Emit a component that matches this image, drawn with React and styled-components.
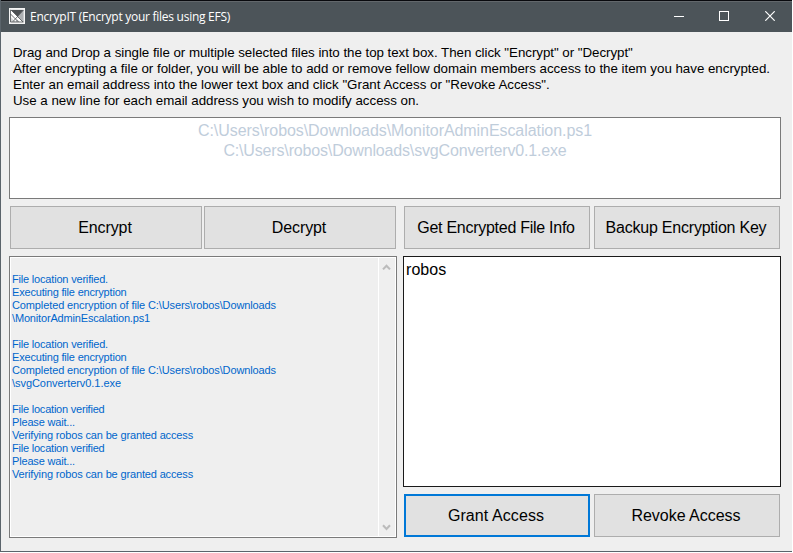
import React from "react";
import styled, { createGlobalStyle } from "styled-components";

const GlobalStyle = createGlobalStyle`
  * { box-sizing: border-box; }
  body { margin: 0; background: #fff; overflow: hidden; font-family: "Liberation Sans", Arial, sans-serif; color: #000; }
`;

const Window = styled.div`
  width: 792px;
  height: 552px;
  display: flex;
  flex-direction: column;
  background: #efefef;
  border-left: 1px solid #5b646b;
  border-bottom: 1px solid #5b646b;
`;

const TitleBar = styled.header`
  height: 32px;
  flex: none;
  display: flex;
  align-items: flex-start;
  padding: 6px 0 0 8px;
  background: #4c5459;
  border-top: 1px solid #08090d;
  box-shadow: inset 0 1px 0 #62676b;
`;

const AppIcon = styled.svg`
  width: 16px;
  height: 16px;
  flex: none;
  margin-top: 1px;
`;

const Title = styled.h1`
  margin: 1px 0 0 5px;
  flex: 1;
  font: 400 12px/18px "Open Sans", "Noto Sans", sans-serif;
  letter-spacing: -0.268px;
  color: #fff;
  white-space: nowrap;
`;

const Controls = styled.div`
  display: flex;
  gap: 35px;
  margin: 4px 17px 0 0;
`;

const ControlButton = styled.button`
  width: 10px;
  height: 10px;
  padding: 0;
  border: 0;
  background: none;
  display: flex;
  &:last-child { margin-left: 1px; }
  svg { display: block; }
`;

const Content = styled.main`
  flex: 1;
  display: flex;
  flex-direction: column;
  padding: 13px 11px 0 8px;
`;

const Instructions = styled.div`
  height: 72px;
  padding-left: 4px;
  font-size: 13.333px;
  line-height: 16px;
`;

const Line = styled.div`
  min-height: 1lh;
  white-space: pre;
  letter-spacing: ${(p) => p.$spacing || 0}px;
`;

const DropBox = styled.div`
  height: 82px;
  padding-top: 3px;
  border: 1px solid #7a7a7a;
  background: #fff;
  color: #bfcddb;
  font-size: 16px;
  line-height: 20px;
  text-align: center;
`;

const Columns = styled.div`
  display: grid;
  grid-template-columns: 388px 378px;
  column-gap: 6px;
  margin-top: 7px;
`;

const Column = styled.div`
  display: flex;
  flex-direction: column;
  gap: 7px;
`;

const ButtonRow = styled.div`
  display: grid;
  grid-template-columns: 1fr 1fr;
  gap: ${(p) => p.$gap}px;
  padding: 0 1px;
`;

const PushButton = styled.button`
  height: 43px;
  padding: 0 2px 0 0;
  border: ${(p) => (p.$focused ? "2px solid #0078d7" : "1px solid #adadad")};
  background: #e1e1e1;
  color: #000;
  font: 16px "Liberation Sans", Arial, sans-serif;
  letter-spacing: ${(p) => p.$spacing || 0}px;
  white-space: nowrap;
`;

const LogBox = styled.div`
  height: 282px;
  display: flex;
  border: 1px solid #7a7a7a;
  box-shadow: inset 0 0 0 1px #fff;
  padding: 1px;
`;

const LogText = styled.div`
  flex: 1;
  padding: 2px 0 0 1px;
  color: #0066cc;
  font-size: 11px;
  line-height: 13px;
`;

const ScrollBar = styled.div`
  width: 17px;
  border-left: 1px solid #fff;
  display: flex;
  flex-direction: column;
  justify-content: space-between;
  align-items: center;
  padding: 6px 1px 5px 0;
`;

const MemberBox = styled.div`
  height: 231px;
  padding: 3px 2px;
  border: 1px solid #1a1a1a;
  background: #fff;
  font-size: 16px;
  line-height: 20px;
`;

const instructions = [
  ['Drag and Drop a single file or multiple selected files into the top text box. Then click "Encrypt" or "Decrypt"', -0.037],
  ["After encrypting a file or folder, you will be able to add or remove fellow domain members access to the item you have encrypted.", -0.018],
  ['Enter an email address into the lower text box and click "Grant Access or "Revoke Access".', -0.005],
  ["Use a new line for each email address you wish to modify access on.", -0.01],
];

const files = [
  ["C:\\Users\\robos\\Downloads\\MonitorAdminEscalation.ps1", -0.069],
  ["C:\\Users\\robos\\Downloads\\svgConverterv0.1.exe", -0.16],
];

const log = [
  [""],
  ["File location verified.", -0.186],
  ["Executing file encryption", -0.189],
  ["Completed encryption of file C:\\Users\\robos\\Downloads", -0.118],
  ["\\MonitorAdminEscalation.ps1", -0.165],
  [""],
  ["File location verified.", -0.186],
  ["Executing file encryption", -0.189],
  ["Completed encryption of file C:\\Users\\robos\\Downloads", -0.118],
  ["\\svgConverterv0.1.exe", -0.05],
  [""],
  ["File location verified", -0.214],
  ["Please wait...", -0.173],
  ["Verifying robos can be granted access", -0.149],
  ["File location verified", -0.214],
  ["Please wait...", -0.173],
  ["Verifying robos can be granted access", -0.149],
];

const Lines = ({ items }) =>
  items.map(([text, spacing], i) => (
    <Line key={i} $spacing={spacing}>{text}</Line>
  ));

const Chevron = ({ down }) => (
  <svg width="9" height="7" viewBox="0 0 9 7">
    <path d={down ? "M1 1.2L4.5 4.9L8 1.2" : "M1 5.4L4.5 1.7L8 5.4"} fill="none" stroke="#bcbcbc" strokeWidth="2.1" />
  </svg>
);

export default function App() {
  return (
    <>
      <GlobalStyle />
      <Window>
        <TitleBar>
          <AppIcon viewBox="0 0 16 16">
            <rect width="16" height="16" fill="#f4f4f4" />
            <rect x="1.5" y="1.5" width="13" height="12.5" fill="#d2d4d5" />
            <path d="M2 2H14.5L8.5 8.5Z" fill="#4b4f52" />
            <path d="M14.5 2V14L8.5 8.3Z" fill="#aeb1b3" />
            <path d="M4 14L8.5 9.5L13 14Z" fill="#b5b8ba" />
            <path d="M1.5 2V9L6.5 14L9 9Z" fill="#f8f8f8" />
            <path d="M1.5 3.2L12.5 14.2" stroke="#fff" strokeWidth="2.2" />
            <path d="M1.8 1.8L14 14M1.5 6L9 13.5M14.5 2L4 13.5M1.5 2V14H14.5" fill="none" stroke="#4b4f52" strokeWidth="0.8" />
          </AppIcon>
          <Title>EncrypIT (Encrypt your files using EFS)</Title>
          <Controls>
            <ControlButton aria-label="Minimize">
              <svg width="10" height="10"><path d="M0 5.5H10" stroke="#fff" /></svg>
            </ControlButton>
            <ControlButton aria-label="Maximize">
              <svg width="10" height="10"><rect x="0.5" y="0.5" width="9" height="9" fill="none" stroke="#fff" /></svg>
            </ControlButton>
            <ControlButton aria-label="Close">
              <svg width="10" height="10"><path d="M0.3 0.3L9.7 9.7M9.7 0.3L0.3 9.7" stroke="#fff" strokeWidth="1.2" /></svg>
            </ControlButton>
          </Controls>
        </TitleBar>
        <Content>
          <Instructions><Lines items={instructions} /></Instructions>
          <DropBox><Lines items={files} /></DropBox>
          <Columns>
            <Column>
              <ButtonRow $gap={2}>
                <PushButton $spacing={-0.1}>Encrypt</PushButton>
                <PushButton $spacing={-0.12}>Decrypt</PushButton>
              </ButtonRow>
              <LogBox>
                <LogText><Lines items={log} /></LogText>
                <ScrollBar>
                  <Chevron />
                  <Chevron down />
                </ScrollBar>
              </LogBox>
            </Column>
            <Column>
              <ButtonRow $gap={4}>
                <PushButton $spacing={-0.27}>Get Encrypted File Info</PushButton>
                <PushButton $spacing={-0.22}>Backup Encryption Key</PushButton>
              </ButtonRow>
              <MemberBox><Line $spacing={0.05}>robos</Line></MemberBox>
              <ButtonRow $gap={4}>
                <PushButton $focused $spacing={0.08}>Grant Access</PushButton>
                <PushButton $spacing={-0.02}>Revoke Access</PushButton>
              </ButtonRow>
            </Column>
          </Columns>
        </Content>
      </Window>
    </>
  );
}
